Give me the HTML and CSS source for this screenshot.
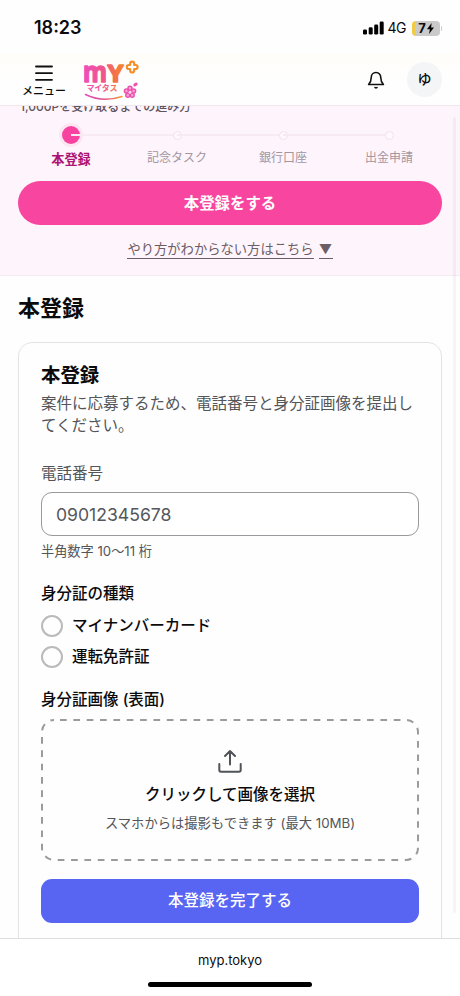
FILE: index.html
```html
<!DOCTYPE html>
<html lang="ja">
<head>
<meta charset="utf-8">
<title>本登録</title>
<link rel="stylesheet" href="styles.css">
</head>
<body>
<div class="screen">
  <div class="status">
    <span class="clock">18:23</span>
    <div class="status-right">
      <svg class="signal" width="22" height="14" viewBox="0 0 22 14"><rect x="0" y="8.5" width="4" height="5" rx="1.3"/><rect x="5.7" y="6.3" width="4" height="7.2" rx="1.3"/><rect x="11.2" y="3.6" width="4" height="9.9" rx="1.3"/><rect x="16.7" y="0.5" width="4" height="13" rx="1.3"/></svg>
      <span class="net">4G</span>
      <div class="battery"><span>7</span><svg width="7" height="11" viewBox="0 0 7 11"><path d="M4.6 0 0 6.2h2.9L2 11 7 4.6H4.1z"/></svg></div>
      <i class="battery-tip"></i>
    </div>
  </div>

  <header class="header">
    <div class="menu">
      <svg width="18" height="17" viewBox="0 0 18 17"><path d="M1 1.500h16M1 8.200h16M1 14.800h16" stroke="#111" stroke-width="1.800" stroke-linecap="round"/></svg>
      <span>メニュー</span>
    </div>
    <svg class="logo" width="60" height="44" viewBox="0 0 60 44">
      <defs>
        <linearGradient id="brand" gradientUnits="userSpaceOnUse" x1="2" y1="0" x2="56" y2="0"><stop offset="0" stop-color="#ee4fb8"/><stop offset=".35" stop-color="#f0568a"/><stop offset=".6" stop-color="#f47a3a"/><stop offset="1" stop-color="#f59a23"/></linearGradient>
        <linearGradient id="smile" x1="0" x2="1" y1="0" y2="0"><stop offset="0" stop-color="#e04fc0"/><stop offset=".5" stop-color="#e2508f"/><stop offset="1" stop-color="#f2a03a"/></linearGradient>
      </defs>
      <g class="logo-my" stroke="url(#brand)" fill="url(#brand)"><text class="logo-m" x="0" y="21.500" textLength="24" lengthAdjust="spacingAndGlyphs">m</text><text class="logo-y" x="24.500" y="21.500" textLength="16" lengthAdjust="spacingAndGlyphs">Y</text></g>
      <path d="M47.200 5V3.600a2 2 0 0 1 4 0V5h1.400a2 2 0 0 1 0 4h-1.400v1.400a2 2 0 0 1-4 0V9h-1.400a2 2 0 0 1 0-4z" fill="#fff" stroke="#f4902c" stroke-width="2.200" stroke-linejoin="round"/>
      <text class="logo-kana" x="3.500" y="31.300" textLength="31" fill="url(#brand)">マイタス</text>
      <path d="M2.500 34.500Q20 43 39 36.500" fill="none" stroke="url(#smile)" stroke-width="1.600" stroke-linecap="round"/>
      <g fill="#f8a5d5" stroke="#ed52ae" stroke-width="1.500"><circle cx="47" cy="28.300" r="2"/><circle cx="50.600" cy="31.100" r="2"/><circle cx="49.200" cy="35.200" r="2"/><circle cx="44.800" cy="35.200" r="2"/><circle cx="43.400" cy="31.100" r="2"/></g>
      <circle cx="47" cy="32.200" r="1.500" fill="#fbd0e8"/>
      <ellipse cx="52.500" cy="24.500" rx="2.400" ry="1.600" transform="rotate(-35 52.500 24.500)" fill="#ed52ae"/>
    </svg>
    <svg class="bell" width="20" height="20" viewBox="0 0 24 24" fill="none" stroke="#111" stroke-width="1.9" stroke-linejoin="round" stroke-linecap="round"><path d="M12 3C8.4 3 6.3 5.8 6.3 9c0 4.500-1.500 6.500-3.200 8.400h17.800C19.200 15.500 17.700 13.500 17.700 9c0-3.200-2.100-6-5.700-6zM10.800 21c.7.6 1.700.6 2.400 0"/></svg>
    <div class="avatar">ゆ</div>
  </header>

  <main class="content">
    <section class="hero">
      <p class="hero-title">1,000Pを受け取るまでの進み方</p>
      <ol class="steps">
        <li class="step current"><div class="track"><i></i></div><span>本登録</span></li>
        <li class="step"><div class="track"><i></i></div><span>記念タスク</span></li>
        <li class="step"><div class="track"><i></i></div><span>銀行口座</span></li>
        <li class="step"><div class="track"><i></i></div><span>出金申請</span></li>
      </ol>
      <button class="cta">本登録をする</button>
      <div class="help"><span>やり方がわからない方はこちら</span><span class="arrow">▼</span></div>
    </section>

    <h1>本登録</h1>
    <section class="card">
      <h2>本登録</h2>
      <p class="lead">案件に応募するため、電話番号と身分証画像を提出してください。</p>
      <label class="label" for="tel">電話番号</label>
      <input id="tel" class="input" placeholder="09012345678">
      <p class="hint">半角数字 10〜11 桁</p>
      <h3 class="kind">身分証の種類</h3>
      <div class="radio"><i></i><span>マイナンバーカード</span></div>
      <div class="radio"><i></i><span>運転免許証</span></div>
      <h3 class="front">身分証画像 (表面)</h3>
      <div class="drop">
        <svg class="outline" width="378" height="142" viewBox="0 0 378 142"><rect x="1" y="1" width="376" height="140" rx="12" fill="none" stroke="#999b9d" stroke-width="2" stroke-dasharray="6.700 6.650" stroke-dashoffset="-6"/></svg>
        <svg class="upload" width="24" height="24" viewBox="0 0 24 24" fill="none" stroke="#505357" stroke-width="2" stroke-linecap="round" stroke-linejoin="round"><path d="M12 15.500V2M7 7l5-5 5 5M1.300 15v6q0 1.700 1.700 1.700h18q1.700 0 1.700-1.700v-6"/></svg>
        <strong>クリックして画像を選択</strong>
        <span>スマホからは撮影もできます (最大 10MB)</span>
      </div>
      <button class="submit">本登録を完了する</button>
    </section>
    <i class="scrollbar"></i>
  </main>

  <footer class="browser"><span>myp.tokyo</span><i></i></footer>
</div>
</body>
</html>
```
FILE: styles.css
```css
* { box-sizing: border-box; margin: 0; padding: 0; }
body { font-family: Inter, "Noto Sans CJK JP", sans-serif; color: #0b0b0d; background: #fff; }
button { border: 0; font-family: inherit; display: block; width: 100%; }
svg { display: block; flex: none; }
.screen { width: 460px; height: 996px; display: flex; flex-direction: column; overflow: hidden; background: #fefefe; }

.status { height: 54px; flex: none; display: flex; align-items: center; justify-content: space-between; padding: 2px 18px 0 34px; }
.clock { font-size: 18px; font-weight: 600; line-height: 22px; }
.status-right { display: flex; align-items: center; }
.signal { margin-right: 3px; }
.net { font-size: 14px; line-height: 16px; width: 19px; margin-right: 5px; letter-spacing: -.6px; }
.battery { width: 28px; height: 15px; border-radius: 4px; background: linear-gradient(90deg, #f0ca45 0 2.500px, #cacaca 2.500px); display: flex; align-items: center; justify-content: center; gap: 1px; font-size: 13px; font-weight: 700; line-height: 15px; padding-left: 1px; }
.battery-tip { width: 1.500px; height: 5px; margin-left: 1px; border-radius: 0 2px 2px 0; background: #ccc; }

.header { height: 52px; flex: none; display: flex; align-items: center; padding: 0 18px 0 22px; background: linear-gradient(#fffdf9, #fefefe 50%); border-bottom: 1px solid #f1e8ed; }
.menu { width: 44px; display: flex; flex-direction: column; align-items: center; padding-top: 4px; }
.menu span { font-size: 11px; line-height: 16px; font-weight: 500; margin-top: 1px; white-space: nowrap; }
.logo { margin-left: 17px; margin-top: 4px; }
.logo-my { font-family: "Noto Sans", sans-serif; font-weight: 700; stroke-width: 1.400px; stroke-linejoin: round; }
.logo-m { font-size: 29px; }
.logo-y { font-size: 22.500px; }
.logo-kana { font-family: "Noto Sans CJK JP", sans-serif; font-size: 8px; font-weight: 700; }
.bell { margin-left: auto; margin-right: 21px; }
.avatar { width: 35px; height: 35px; border-radius: 50%; background: #f4f5f6; font-size: 14px; font-weight: 500; line-height: 33px; text-align: center; }

.content { flex: 1; min-height: 0; overflow: hidden; position: relative; }
.scrollbar { position: absolute; right: 4px; top: 11px; width: 3px; height: 796px; border-radius: 2px; background: rgba(90, 60, 80, .05); }
.hero { height: 170px; overflow: hidden; background: #fef4fb; border-bottom: 1px solid #f7e9f1; padding: 0 18px; }
.hero-title { font-size: 12px; font-weight: 500; line-height: 16px; color: #5f535d; margin-top: -7px; padding-left: 2px; margin-bottom: 8px; }
.steps { display: flex; list-style: none; }
.step { flex: 1; display: flex; flex-direction: column; align-items: center; }
.track { width: 100%; height: 24px; display: flex; align-items: center; justify-content: center; position: relative; }
.track i { width: 9px; height: 9px; border-radius: 50%; background: #fff9fd; border: 1px solid #f1e2eb; }
.track::after { content: ""; position: absolute; left: 50%; top: 11px; width: 100%; height: 2px; background: #f7eaf2; }
.step:last-child .track::after { display: none; }
.current .track i { width: 18px; height: 18px; background: #f7439f; border: 0; box-shadow: 0 0 0 3px #fde5f2; }
.step span { font-size: 12px; line-height: 18px; margin-top: 2px; color: #a3969f; }
.step.current span { font-size: 13.200px; font-weight: 700; color: #ad1475; margin-top: 3px; }
.cta { height: 44px; margin-top: 13px; border-radius: 22px; background: #f8459f; color: #fff; font-size: 15.400px; font-weight: 700; line-height: 43px; }
.help { display: flex; justify-content: center; gap: 5px; margin-top: 15px; font-size: 13.300px; line-height: 18px; color: #6c5e67; }
.help span { border-bottom: 1px solid #6c5e67; }
.help .arrow { width: 14px; text-align: center; }

h1 { font-size: 22px; font-weight: 700; line-height: 32px; margin: 16px 18px 0; }
.card { margin: 18px 18px 0; height: 640px; border: 1px solid #e3e4e6; border-radius: 14px; padding: 20px 22px; box-shadow: 0 1px 2px rgba(0, 0, 0, .03); }
h2 { font-size: 19.400px; font-weight: 700; line-height: 24px; }
.lead { font-size: 15.500px; line-height: 22px; color: #535559; margin-top: 6px; margin-right: -1px; }
.label { display: block; font-size: 15.500px; line-height: 22px; color: #535559; margin-top: 26px; }
.input { display: block; width: 100%; height: 44px; margin-top: 7px; border: 1px solid #98999c; border-radius: 11px; background: #fff; padding: 0 14px; font: 17.600px Inter, sans-serif; }
.input::placeholder { color: #55575b; opacity: 1; }
.hint { font-size: 13.200px; line-height: 18px; color: #535559; margin-top: 6px; }
h3 { font-size: 15.500px; line-height: 22px; font-weight: 500; }
.kind { margin-top: 23px; }
.radio { height: 22px; display: flex; align-items: center; gap: 9px; margin-top: 10px; font-size: 15.500px; font-weight: 500; line-height: 22px; }
.radio + .radio { margin-top: 9px; }
.radio i { width: 22px; height: 22px; border: 2px solid #b9babc; border-radius: 50%; }
.front { margin-top: 21px; }
.drop { height: 142px; margin-top: 8px; position: relative; display: flex; flex-direction: column; align-items: center; padding-top: 30px; }
.outline { position: absolute; inset: 0; }
.drop strong { font-size: 15.500px; font-weight: 500; line-height: 22px; margin-top: 11px; }
.drop span { font-size: 13.300px; line-height: 18px; color: #535559; margin-top: 8px; }
.submit { height: 44px; margin-top: 18px; border-radius: 11px; background: #5865f2; color: #fff; font-size: 15.500px; font-weight: 500; line-height: 44px; }

.browser { height: 58px; flex: none; border-top: 1px solid #dedede; background: #fff; display: flex; flex-direction: column; align-items: center; padding-top: 11px; font-size: 13px; line-height: 20px; }
.browser i { width: 164px; height: 5px; border-radius: 3px; background: #000; margin-top: 12px; }
```
